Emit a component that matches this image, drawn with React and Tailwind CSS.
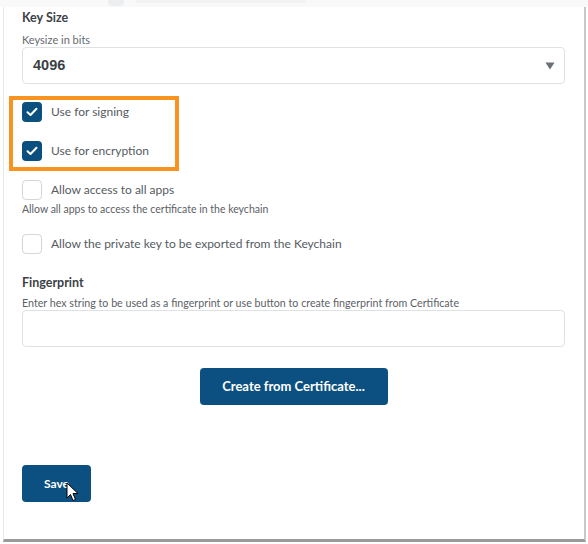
import { useState } from "react";

function Check({ checked, onChange }) {
  return (
    <button
      type="button"
      onClick={onChange}
      className={`w-[20px] h-[20px] rounded-[4px] flex items-center justify-center shrink-0 ${
        checked ? "bg-[#0b4f7e]" : "bg-white border border-[#d3d6da]"
      }`}
    >
      {checked && (
        <svg width="12" height="10" viewBox="0 0 12 10">
          <path d="M1.5 5.2 L4.5 8 L10.5 1.8" fill="none" stroke="#fff" strokeWidth="2" strokeLinecap="round" strokeLinejoin="round" />
        </svg>
      )}
    </button>
  );
}

function CheckRow({ label, checked, onChange }) {
  return (
    <label className="flex items-center gap-[9px] h-[20px] cursor-pointer">
      <Check checked={checked} onChange={onChange} />
      <span className="text-[12px] text-[#555b61]">{label}</span>
    </label>
  );
}

export default function App() {
  const [opts, setOpts] = useState({ sign: true, enc: true, all: false, exp: false });
  const toggle = k => setOpts(o => ({ ...o, [k]: !o[k] }));

  return (
    <div className="w-[588px] h-[544px] bg-white overflow-hidden" style={{ fontFamily: "Lato, 'Open Sans', sans-serif" }}>
      {/* faded row of the page behind the panel */}
      <div className="h-[7px] bg-[#f4f4f4] flex items-start pl-[108px] gap-[12px] opacity-50">
        <div className="w-[16px] h-[6px] bg-[#dcdfe2] rounded-b-sm" />
        <div className="w-[170px] h-[3px] bg-[#e4e6e8] rounded-sm" />
      </div>

      {/* panel */}
      <div className="ml-[3px] w-[583px] h-[535px] bg-white border-l border-[#e6e6e6] border-r-[2px] border-r-[#c8c8c8] border-b-[3px] border-b-[#9a9a9a] pl-[18px] pr-[19px] pt-[3px]">
        <div className="text-[12.5px] font-bold text-[#3c4146] leading-[16px]">Key Size</div>
        <div className="text-[11px] text-[#666b70] mt-[8px] leading-[12px]">Keysize in bits</div>
        <div className="mt-[1px] h-[37px] border border-[#dfe2e5] rounded-[4px] flex items-center justify-between pl-[10px] pr-[9px]">
          <span className="text-[14.5px] font-bold text-[#3a3f44]" style={{ fontFamily: "'Liberation Sans', Arial, sans-serif" }}>4096</span>
          <svg width="10" height="8" viewBox="0 0 10 8">
            <path d="M0.5 0.5 H9.5 L5 7.5 Z" fill="#6b7178" />
          </svg>
        </div>

        {/* highlighted options */}
        <div className="mt-[12px] -ml-[13px] w-[170px] h-[75px] border-[4px] border-[#f7931e] pl-[9px] pt-[2px] flex flex-col gap-[19px]">
          <CheckRow label="Use for signing" checked={opts.sign} onChange={() => toggle("sign")} />
          <CheckRow label="Use for encryption" checked={opts.enc} onChange={() => toggle("enc")} />
        </div>

        <div className="mt-[9px]">
          <CheckRow label="Allow access to all apps" checked={opts.all} onChange={() => toggle("all")} />
          <div className="text-[10.5px] text-[#5c6166] mt-[3px] leading-[13px]">Allow all apps to access the certificate in the keychain</div>
        </div>

        <div className="mt-[18px]">
          <CheckRow label="Allow the private key to be exported from the Keychain" checked={opts.exp} onChange={() => toggle("exp")} />
        </div>

        <div className="text-[12.5px] font-bold text-[#3c4146] mt-[21px] leading-[16px]">Fingerprint</div>
        <div className="text-[10.7px] text-[#5c6166] mt-[5px] leading-[13px]">Enter hex string to be used as a fingerprint or use button to create fingerprint from Certificate</div>
        <input className="mt-[1px] w-full h-[37px] border border-[#dfe2e5] rounded-[4px] px-[10px] outline-none" />

        <div className="flex justify-center mt-[21px]">
          <button className="w-[188px] h-[37px] bg-[#0b5080] text-white text-[13px] font-bold rounded-[4px]">
            Create from Certificate...
          </button>
        </div>

        <div className="mt-[60px] relative w-[69px]">
          <button className="w-[69px] h-[37px] bg-[#0b5080] text-white text-[12px] font-bold rounded-[4px]">
            Save
          </button>
          <svg className="absolute left-[44px] top-[17px]" width="14" height="20" viewBox="0 0 14 20">
            <path d="M1 1 L1 16 L4.5 12.5 L7 18.5 L9.5 17.5 L7 11.5 L12 11.5 Z" fill="#fff" stroke="#000" strokeWidth="1" strokeLinejoin="round" />
          </svg>
        </div>
      </div>
    </div>
  );
}
